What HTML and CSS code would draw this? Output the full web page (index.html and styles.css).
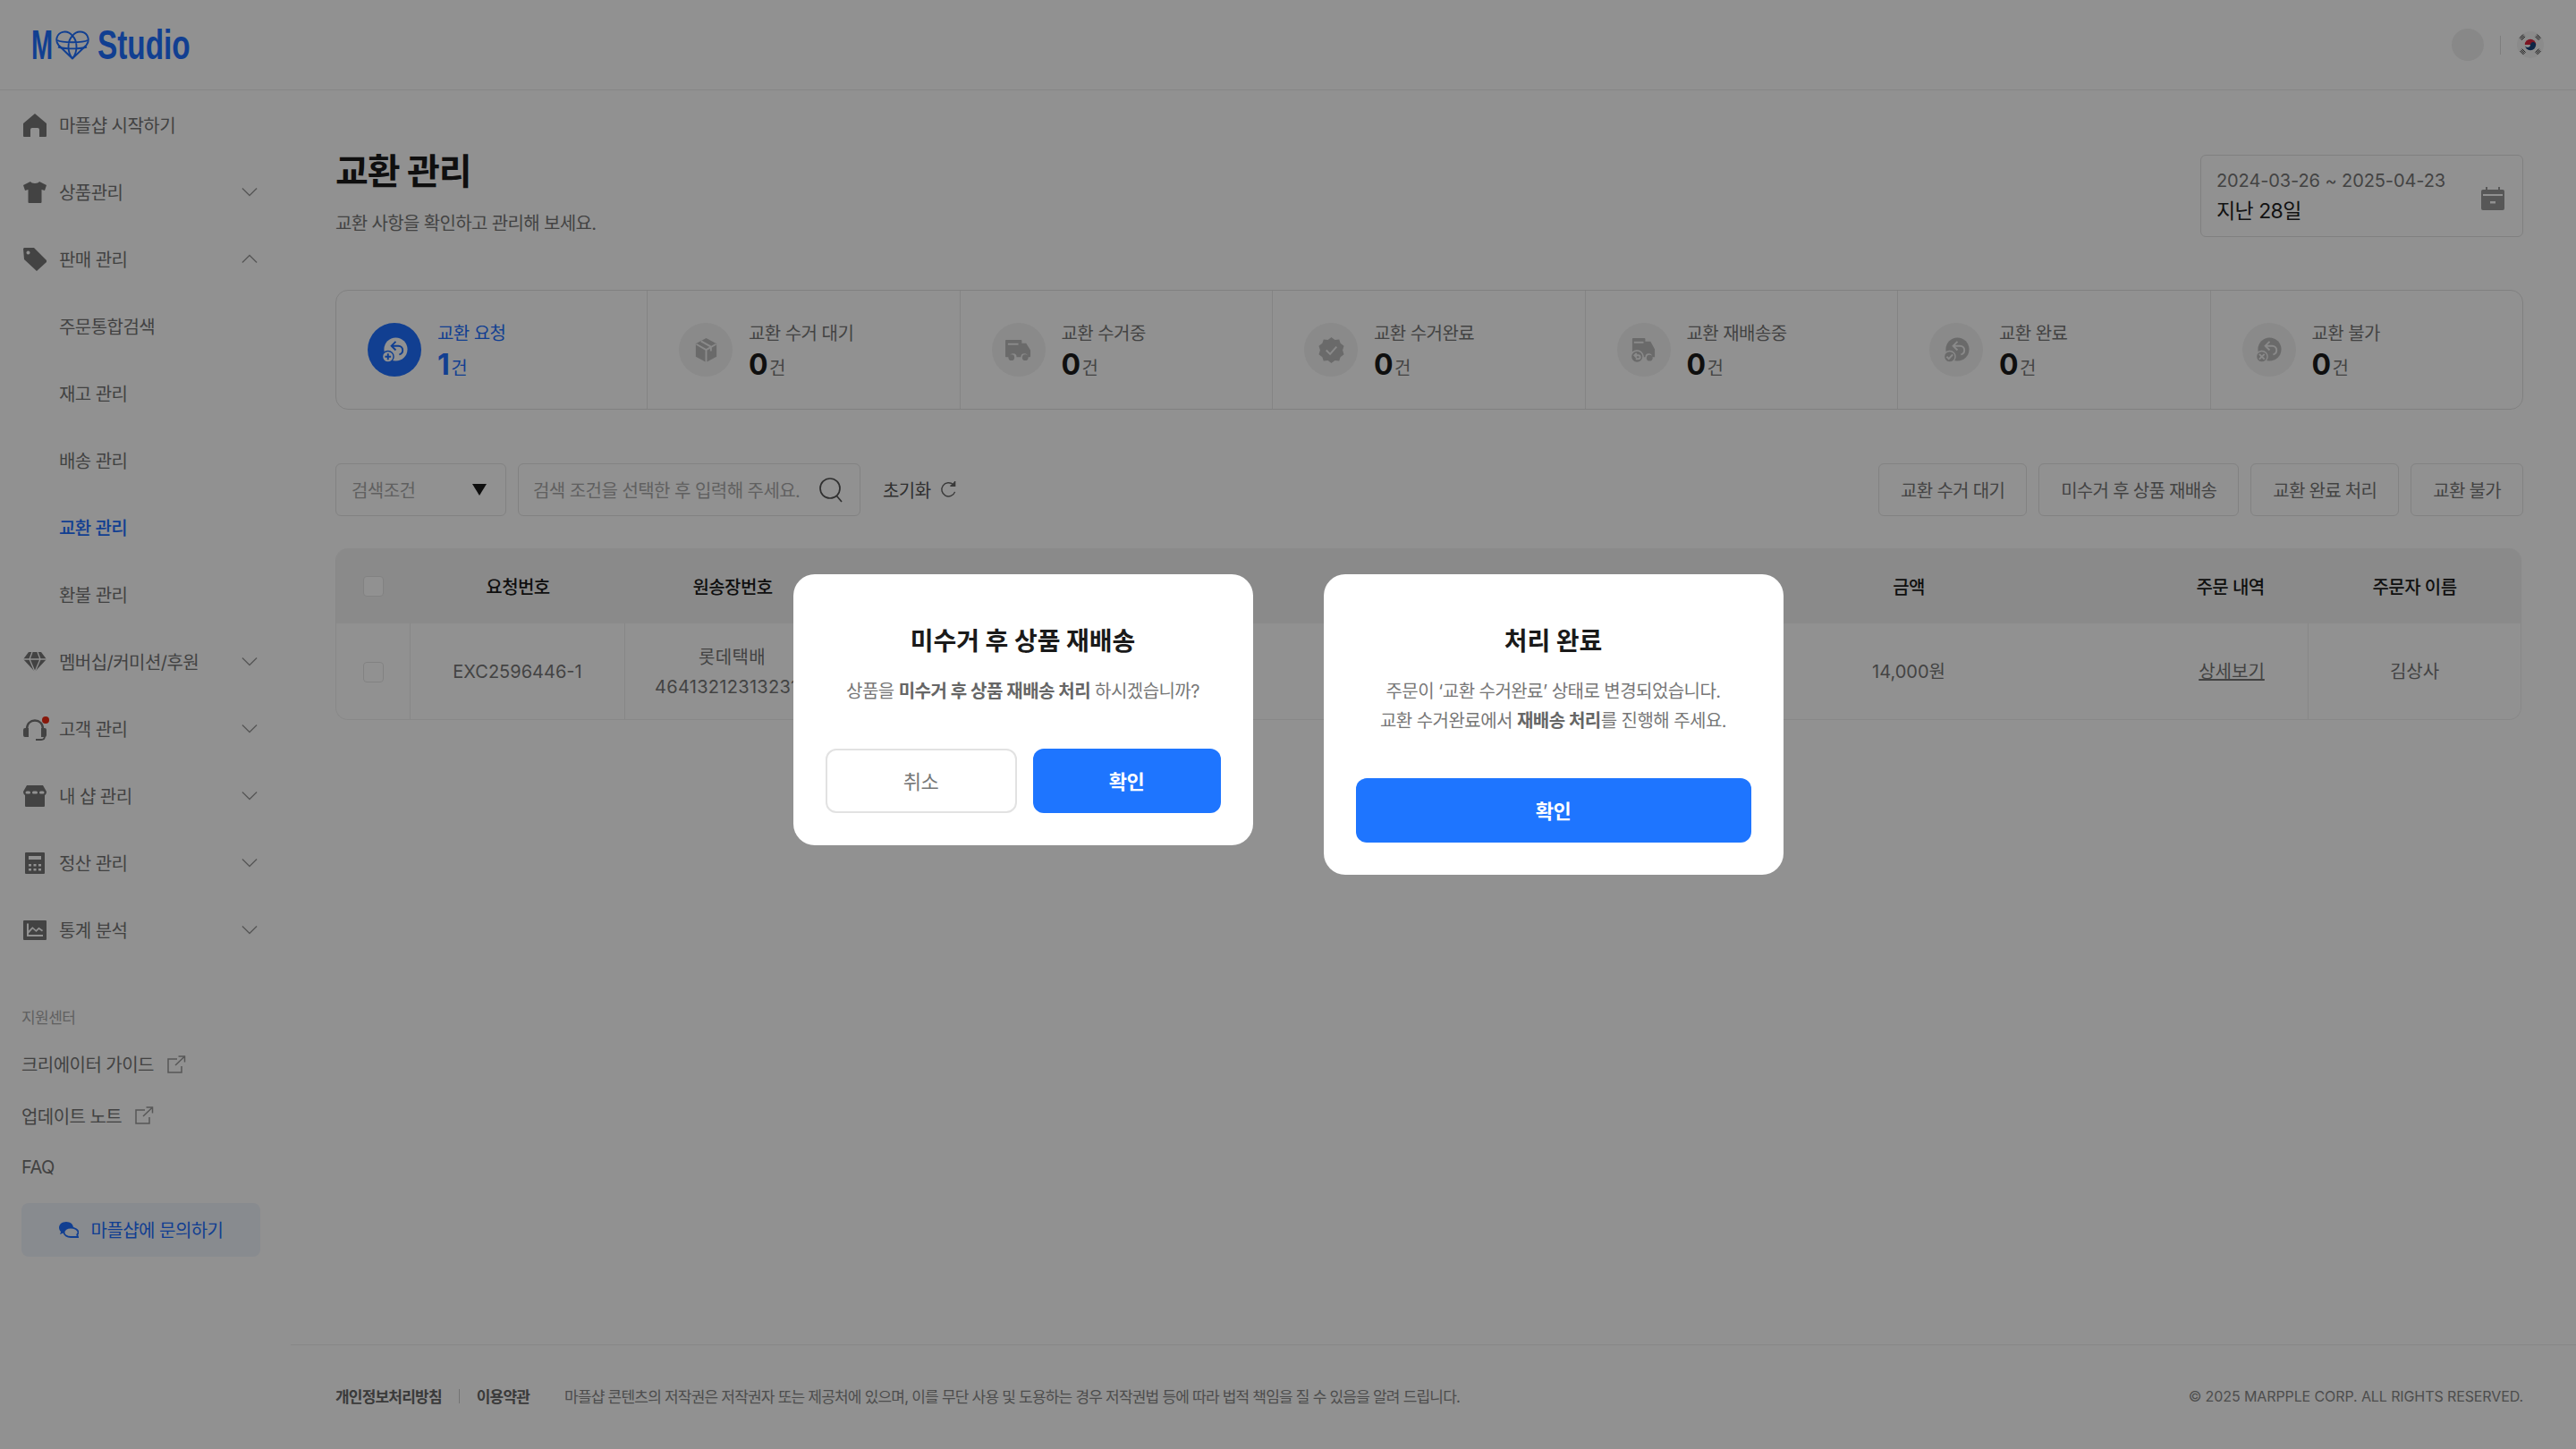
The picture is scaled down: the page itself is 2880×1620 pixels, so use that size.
FILE: index.html
```html
<!DOCTYPE html>
<html lang="ko">
<head>
  <meta charset="UTF-8" />
  <title>교환 관리 - MP Studio</title>
  <link rel="stylesheet" href="styles.css">
</head>
<body>

  <header class="topbar">
    <div class="logo">
      <span class="logo-m">M</span>
      <svg class="logo-heart" viewBox="0 0 38 33" fill="none" stroke="currentColor" stroke-width="1.9">
        <path d="M19 31.500 3.500 16.500C-.5 12 1 3.500 8 1.800c4.500-1 8.500 1 11 4.200 2.500-3.200 6.500-5.200 11-4.200 7 1.700 8.500 10.200 4.500 14.700z"/>
        <path d="M19 6c-6 6-6 18 0 25.500M19 6c6 6 6 18 0 25.500M2 11c5 3 29 3 34 0M3 18.500c6 2.500 26 2.500 32 0"/>
      </svg>
      <span class="logo-word">Studio</span>
    </div>
    <div class="topbar-right">
      <div class="avatar"></div>
      <div class="topbar-sep"></div>
      <svg class="flag" viewBox="0 0 30 30">
        <circle cx="15" cy="15" r="15" fill="#f4f4f4"/>
        <path d="M8.800 15a6.200 6.200 0 0 1 12.400 0z" fill="#d8283f"/>
        <path d="M8.800 15a6.200 6.200 0 0 0 12.400 0c0-1.700-1.400-3.100-3.100-3.100S15 13.300 15 15s-1.400 3.100-3.100 3.100S8.800 16.700 8.800 15z" fill="#17437c"/>
        <g stroke="#333" stroke-width="1">
          <path d="M3 7.500 7 3.500M4 8.700l4-4M5 9.900l4-4"/>
          <path d="M22.500 3.500l4 4M21.500 4.700l4 4M20.500 5.900l4 4"/>
          <path d="M3.500 22l4 4M4.500 20.800l4 4M5.500 19.600l4 4"/>
          <path d="M22.500 26l4-4M21.500 24.800l4-4M20.500 23.600l4-4"/>
        </g>
      </svg>
    </div>
  </header>

  <div class="layout">
    <aside class="sidebar">
      <nav class="side-nav">
        <a class="nav-item">
          <svg class="nav-icon" viewBox="0 0 26 26"><path d="M13 0 26 11v14a1 1 0 0 1-1 1h-7v-8a2 2 0 0 0-2-2h-6a2 2 0 0 0-2 2v8H1a1 1 0 0 1-1-1V11z"/></svg>
          <span>마플샵 시작하기</span>
        </a>
        <a class="nav-item">
          <svg class="nav-icon" viewBox="0 0 26 26"><path d="M8 1c1 2.500 9 2.500 10 0l8 4-2 6-3.500-1v14a1 1 0 0 1-1 1H6.500a1 1 0 0 1-1-1V10L2 11 0 5z"/></svg>
          <span>상품관리</span>
          <svg class="chev" viewBox="0 0 20 12"><path d="M1 1.500 10 10.500 19 1.500"/></svg>
        </a>
        <a class="nav-item">
          <svg class="nav-icon" viewBox="0 0 26 26"><path d="M1 0h11l14 14a1.500 1.500 0 0 1 0 2L15 26 1 13 0 1zM5.500 3.500a2 2 0 1 0 .01 0z" fill-rule="evenodd"/></svg>
          <span>판매 관리</span>
          <svg class="chev" viewBox="0 0 20 12"><path d="M1 10.500 10 1.500 19 10.500"/></svg>
        </a>
        <a class="nav-item nav-sub">주문통합검색</a>
        <a class="nav-item nav-sub">재고 관리</a>
        <a class="nav-item nav-sub">배송 관리</a>
        <a class="nav-item nav-sub is-current">교환 관리</a>
        <a class="nav-item nav-sub">환불 관리</a>
        <a class="nav-item">
          <svg class="nav-icon" viewBox="0 0 26 26"><path d="M6 2h14l6 8-13 14L0 10z"/><path d="M0 10h26M7 10l6 14 6-14M7 10l3-8M19 10l-3-8" fill="none" stroke="#fff" stroke-width="1.300"/></svg>
          <span>멤버십/커미션/후원</span>
          <svg class="chev" viewBox="0 0 20 12"><path d="M1 1.500 10 10.500 19 1.500"/></svg>
        </a>
        <a class="nav-item">
          <span class="nav-icon-wrap">
            <svg class="nav-icon" viewBox="0 0 26 26">
              <path d="M4 13C4 7 8 3.500 13 3.500S22 7 22 13" fill="none" stroke="#777" stroke-width="2.400"/>
              <path d="M2 12h4v10H2a2 2 0 0 1-2-2v-6a2 2 0 0 1 2-2zM20 12h4a2 2 0 0 1 2 2v6a2 2 0 0 1-2 2h-4z"/>
              <path d="M24 21c0 3-1.500 4-4 4h-6" fill="none" stroke="#777" stroke-width="1.800"/>
            </svg>
            <i class="red-dot"></i>
          </span>
          <span>고객 관리</span>
          <svg class="chev" viewBox="0 0 20 12"><path d="M1 1.500 10 10.500 19 1.500"/></svg>
        </a>
        <a class="nav-item">
          <svg class="nav-icon" viewBox="0 0 26 26"><path d="M4 1h18l4 7c0 3-2 4-2 4v12a1 1 0 0 1-1 1H3a1 1 0 0 1-1-1V12S0 11 0 8zM4 7.500a1.500 1.500 0 0 0 0 3h2.500a1.500 1.500 0 0 0 0-3zm7.500 0a1.500 1.500 0 0 0 0 3h3a1.500 1.500 0 0 0 0-3zm8 0a1.500 1.500 0 0 0 0 3H22a1.500 1.500 0 0 0 0-3z" fill-rule="evenodd"/></svg>
          <span>내 샵 관리</span>
          <svg class="chev" viewBox="0 0 20 12"><path d="M1 1.500 10 10.500 19 1.500"/></svg>
        </a>
        <a class="nav-item">
          <svg class="nav-icon" viewBox="0 0 26 26"><path d="M3 1h20a1 1 0 0 1 1 1v22a1 1 0 0 1-1 1H3a1 1 0 0 1-1-1V2a1 1 0 0 1 1-1zm3 4v4h14V5zm0 9v2.500h3V14zm5.500 0v2.500h3V14zm5.500 0v2.500h3V14zM6 19v2.500h3V19zm5.500 0v2.500h3V19zm5.500 0v2.500h3V19z" fill-rule="evenodd"/></svg>
          <span>정산 관리</span>
          <svg class="chev" viewBox="0 0 20 12"><path d="M1 1.500 10 10.500 19 1.500"/></svg>
        </a>
        <a class="nav-item">
          <svg class="nav-icon" viewBox="0 0 26 26"><path d="M1 2h24a1 1 0 0 1 1 1v20a1 1 0 0 1-1 1H1a1 1 0 0 1-1-1V3a1 1 0 0 1 1-1zm3 3.500V20h18v-2H6v-1.500l4.500-5 4 3.500 3-3 3.500 2.500 1-1.500-4.700-3.300-3 3-4-3.500L6 13.500V5.500z" fill-rule="evenodd"/></svg>
          <span>통계 분석</span>
          <svg class="chev" viewBox="0 0 20 12"><path d="M1 1.500 10 10.500 19 1.500"/></svg>
        </a>
      </nav>

      <div class="support">
        <div class="support-title">지원센터</div>
        <a class="support-link">크리에이터 가이드
          <svg class="ext" viewBox="0 0 21 20"><path d="M11 4H1v15h15v-7M9 11 19.500 1M12.500 1h7v6.500"/></svg>
        </a>
        <a class="support-link">업데이트 노트
          <svg class="ext" viewBox="0 0 21 20"><path d="M11 4H1v15h15v-7M9 11 19.500 1M12.500 1h7v6.500"/></svg>
        </a>
        <a class="support-link">FAQ</a>
        <a class="ask-btn">
          <svg viewBox="0 0 22 20" width="22" height="20">
            <path d="M8 1C3.500 1 0 3.800 0 7.500c0 1.800.8 3.400 2.200 4.600L1 15l4-1.500c1 .3 2 .5 3 .5 4.500 0 8-2.800 8-6.500S12.500 1 8 1z" fill="currentColor"/>
            <path d="M13 7.500c-4 0-7.500 2.200-7.500 5.300S9 18 13 18h8l-.8-2.700c.8-.8 1.300-1.600 1.300-2.500 0-3.100-4.500-5.300-8.500-5.300z" fill="#f0f4fc" stroke="currentColor" stroke-width="1.800"/>
          </svg>
          마플샵에 문의하기
        </a>
      </div>
    </aside>

    <main class="main">
      <div class="content">
        <div class="page-head">
          <div class="page-title">
            <h1>교환 관리</h1>
            <p class="page-desc">교환 사항을 확인하고 관리해 보세요.</p>
          </div>
          <div class="date-box">
            <div class="date-text">
              <div class="date-range">2024-03-26 ~ 2025-04-23</div>
              <div class="date-label">지난 28일</div>
            </div>
            <svg class="date-icon" viewBox="0 0 26 26"><path d="M5 0h2v3h12V0h2v3h3a2 2 0 0 1 2 2v19a2 2 0 0 1-2 2H2a2 2 0 0 1-2-2V5a2 2 0 0 1 2-2h3zM2 8v2h22V8zm8 8v2.500h6V16z" fill-rule="evenodd"/></svg>
          </div>
        </div>

        <section class="stats">
          <div class="stat is-active">
            <div class="stat-icon">
              <svg viewBox="0 0 30 30"><circle cx="16" cy="14" r="13.500"/><path class="cut" d="M20 20c2.500-.5 4-2.500 4-5s-2-5-5-5h-7M16 5l-5 5 5 5"/><circle class="cut-fill" cx="7" cy="22.500" r="6.500"/><path class="cut" d="M3.500 22.500h7M7 19v7"/></svg>
            </div>
            <div class="stat-text"><div class="stat-label">교환 요청</div><div class="stat-value"><b>1</b>건</div></div>
          </div>
          <div class="stat">
            <div class="stat-icon">
              <svg viewBox="0 0 30 30"><path d="M15 1 27 7.500v15L15 29 3 22.500v-15z"/><path class="cut" d="M3.500 8 15 14.500 26.500 8M15 14.500V29M9 4.500 20.500 11v5"/></svg>
            </div>
            <div class="stat-text"><div class="stat-label">교환 수거 대기</div><div class="stat-value"><b>0</b>건</div></div>
          </div>
          <div class="stat">
            <div class="stat-icon">
              <svg viewBox="0 0 30 30"><path d="M1 3h17a1 1 0 0 1 1 1v3h5l5 8v7a1 1 0 0 1-1 1h-2a4 4 0 0 0-8 0h-5a4 4 0 0 0-8 0H1a1 1 0 0 1-1-1V4a1 1 0 0 1 1-1z"/><path class="cut" d="M3 8h12"/><circle cx="7" cy="23.500" r="3.500"/><circle cx="23" cy="23.500" r="3.500"/></svg>
            </div>
            <div class="stat-text"><div class="stat-label">교환 수거중</div><div class="stat-value"><b>0</b>건</div></div>
          </div>
          <div class="stat">
            <div class="stat-icon">
              <svg viewBox="0 0 30 30"><path d="M15 0l4 3 5-.5 1.500 4.500 4 3-1.500 5 1.500 5-4 3-1.500 4.500-5-.5-4 3-4-3-5 .5L4.500 23l-4-3L2 15 .5 10l4-3L6 2.500l5 .5z"/><path class="cut" d="M9 15l4.500 4.500L21 11" stroke-width="3"/></svg>
            </div>
            <div class="stat-text"><div class="stat-label">교환 수거완료</div><div class="stat-value"><b>0</b>건</div></div>
          </div>
          <div class="stat">
            <div class="stat-icon">
              <svg viewBox="0 0 30 30"><path d="M3 1h13a1 1 0 0 1 1 1v3h6l5 9v9h-3a4 4 0 0 0-8 0h-2a8 8 0 0 0-13-6V2a1 1 0 0 1 1-1z"/><path class="cut" d="M4 6h11"/><circle cx="22" cy="24" r="3.500"/><circle class="cut-fill" cx="7.500" cy="22.500" r="7"/><path class="cut" d="M5 21h4a2 2 0 0 1 0 4H6M7 18.500 4.500 21 7 23.500"/></svg>
            </div>
            <div class="stat-text"><div class="stat-label">교환 재배송중</div><div class="stat-value"><b>0</b>건</div></div>
          </div>
          <div class="stat">
            <div class="stat-icon">
              <svg viewBox="0 0 30 30"><circle cx="16" cy="14" r="13.500"/><path class="cut" d="M20 20c2.500-.5 4-2.500 4-5s-2-5-5-5h-7M16 5l-5 5 5 5"/><circle class="cut-fill" cx="7" cy="22.500" r="6.500"/><path class="cut" d="M3.500 22.500l2.500 2.500 4.500-5"/></svg>
            </div>
            <div class="stat-text"><div class="stat-label">교환 완료</div><div class="stat-value"><b>0</b>건</div></div>
          </div>
          <div class="stat">
            <div class="stat-icon">
              <svg viewBox="0 0 30 30"><circle cx="16" cy="14" r="13.500"/><path class="cut" d="M20 20c2.500-.5 4-2.500 4-5s-2-5-5-5h-7M16 5l-5 5 5 5"/><circle class="cut-fill" cx="7" cy="22.500" r="6.500"/><path class="cut" d="M4 19.500l6 6M10 19.500l-6 6"/></svg>
            </div>
            <div class="stat-text"><div class="stat-label">교환 불가</div><div class="stat-value"><b>0</b>건</div></div>
          </div>
        </section>

        <div class="toolbar">
          <div class="select-box">검색조건<i class="tri"></i></div>
          <div class="search-box">
            <span>검색 조건을 선택한 후 입력해 주세요.</span>
            <svg viewBox="0 0 26 28" width="26" height="28" fill="none" stroke="#555" stroke-width="1.700"><circle cx="12" cy="12" r="11"/><path d="M19.500 20.500 25 27"/></svg>
          </div>
          <a class="reset">초기화
            <svg viewBox="0 0 20 20" width="19" height="19" fill="none" stroke="#666" stroke-width="1.500"><path d="M17.500 12.500A8 8 0 1 1 15.500 4"/><path d="M12 5.500h5.500V0" fill="#666"/></svg>
          </a>
          <div class="toolbar-actions">
            <button class="act-btn">교환 수거 대기</button>
            <button class="act-btn">미수거 후 상품 재배송</button>
            <button class="act-btn">교환 완료 처리</button>
            <button class="act-btn">교환 불가</button>
          </div>
        </div>

        <section class="table">
          <div class="table-row table-head">
            <div class="cell"><i class="check"></i></div>
            <div class="cell">요청번호</div>
            <div class="cell">원송장번호</div>
            <div class="cell"></div>
            <div class="cell">금액</div>
            <div class="cell"></div>
            <div class="cell">주문 내역</div>
            <div class="cell">주문자 이름</div>
          </div>
          <div class="table-row table-body">
            <div class="cell line"><i class="check"></i></div>
            <div class="cell line">EXC2596446-1</div>
            <div class="cell cell-stack line">롯데택배<br>464132123132312</div>
            <div class="cell"></div>
            <div class="cell">14,000원</div>
            <div class="cell"></div>
            <div class="cell line"><u class="detail-link">상세보기</u></div>
            <div class="cell">김상사</div>
          </div>
        </section>
      </div>

      <footer class="footer">
        <a class="footer-strong">개인정보처리방침</a>
        <i class="footer-sep"></i>
        <a class="footer-strong">이용약관</a>
        <span class="footer-note">마플샵 콘텐츠의 저작권은 저작권자 또는 제공처에 있으며, 이를 무단 사용 및 도용하는 경우 저작권법 등에 따라 법적 책임을 질 수 있음을 알려 드립니다.</span>
        <span class="footer-copy">© 2025 MARPPLE CORP. ALL RIGHTS RESERVED.</span>
      </footer>
    </main>
  </div>

  <div class="overlay">
    <div class="modal">
      <h2>미수거 후 상품 재배송</h2>
      <p>상품을 <b>미수거 후 상품 재배송 처리</b> 하시겠습니까?</p>
      <div class="modal-btns">
        <button class="btn-cancel">취소</button>
        <button class="btn-ok">확인</button>
      </div>
    </div>
    <div class="modal">
      <h2>처리 완료</h2>
      <p>주문이 ‘교환 수거완료’ 상태로 변경되었습니다.<br>교환 수거완료에서 <b>재배송 처리</b>를 진행해 주세요.</p>
      <div class="modal-btns">
        <button class="btn-ok">확인</button>
      </div>
    </div>
  </div>

</body>
</html>
```

FILE: styles.css
```css
* {
  box-sizing: border-box;
  margin: 0;
  padding: 0;
}

body {
  width: 2880px;
  height: 1620px;
  overflow: hidden;
  background: #fff;
  font-family: Inter, "Noto Sans CJK KR", sans-serif;
  font-size: 20px;
  letter-spacing: -0.55px;
  color: #777;
}

a { color: inherit; text-decoration: none; }

button {
  font-family: inherit;
  letter-spacing: inherit;
  cursor: pointer;
}

/* header */
.topbar {
  height: 101px;
  padding: 0 36px 0 35px;
  border-bottom: 1px solid #ececec;
  display: flex;
  align-items: center;
  justify-content: space-between;
}

.logo {
  display: flex;
  align-items: center;
  color: #1e6fff;
  font-family: "Liberation Sans", sans-serif;
  font-weight: 700;
  font-size: 46px;
  letter-spacing: 0;
  line-height: 1;
}

.logo-m,
.logo-word {
  display: inline-block;
  transform-origin: left center;
}

.logo-m {
  transform: scaleX(0.63);
  margin-right: -14px;
}

.logo-word {
  transform: scaleX(0.725);
  margin-right: -39px;
}

.logo-heart {
  width: 38px;
  height: 33px;
  margin: 0 9px 0 3px;
}

.topbar-right {
  display: flex;
  align-items: center;
}

.avatar {
  width: 36px;
  height: 36px;
  border-radius: 50%;
  background: #efefef;
}

.topbar-sep {
  width: 1px;
  height: 21px;
  background: #ddd;
  margin: 0 18px;
}

.flag {
  width: 30px;
  height: 30px;
}

.layout {
  display: flex;
  height: 1519px;
}

/* sidebar */
.sidebar {
  width: 320px;
  flex-shrink: 0;
}

.side-nav { padding-top: 1px; }

.nav-item {
  height: 75px;
  padding: 0 32px 0 26px;
  display: flex;
  align-items: center;
  gap: 14px;
  color: #757575;
}

.nav-icon {
  width: 26px;
  height: 26px;
  flex-shrink: 0;
  fill: #777;
  display: block;
}

.nav-icon-wrap {
  position: relative;
  display: block;
}

.red-dot {
  position: absolute;
  top: -1px;
  right: -3px;
  width: 8px;
  height: 8px;
  border-radius: 50%;
  background: #ef2a12;
}

.chev {
  width: 18px;
  height: 11px;
  margin-left: auto;
  fill: none;
  stroke: #999;
  stroke-width: 1.5;
}

.nav-sub { padding-left: 66px; }

.nav-sub.is-current {
  color: #1e6fff;
  font-weight: 500;
}

.support {
  padding: 49px 29px 0 24px;
}

.support-title {
  font-size: 17px;
  line-height: 24px;
  color: #aaa;
  margin-bottom: 11px;
}

.support-link {
  height: 57.5px;
  display: flex;
  align-items: center;
  gap: 15px;
  color: #757575;
}

.ext {
  width: 21px;
  height: 20px;
  fill: none;
  stroke: #999;
  stroke-width: 1.5;
}

.ask-btn {
  height: 60px;
  margin-top: 11px;
  border-radius: 8px;
  background: #f0f4fc;
  color: #1e6fff;
  display: flex;
  align-items: center;
  justify-content: center;
  gap: 14px;
}

/* main */
.main {
  flex: 1;
  display: flex;
  flex-direction: column;
  justify-content: space-between;
}

.content {
  padding: 72px 59px 0 55px;
}

.page-head {
  display: flex;
  justify-content: space-between;
  align-items: flex-start;
  height: 151px;
}

.page-title { margin-top: -6px; }

.page-head h1 {
  font-size: 40px;
  font-weight: 700;
  line-height: 50px;
  letter-spacing: -1px;
  color: #1c1c1c;
}

.page-desc {
  margin-top: 19px;
  line-height: 28px;
  letter-spacing: -0.65px;
  color: #777;
}

.date-box {
  width: 361px;
  height: 92px;
  padding: 0 20px 0 17px;
  border: 1px solid #e2e2e2;
  border-radius: 6px;
  display: flex;
  align-items: center;
  justify-content: space-between;
}

.date-text { padding-top: 3px; }

.date-range {
  line-height: 30px;
  letter-spacing: -0.1px;
  color: #777;
}

.date-label {
  font-size: 23px;
  font-weight: 400;
  line-height: 38px;
  color: #222;
}

.date-icon {
  width: 26px;
  height: 26px;
  fill: #999;
  margin-top: 5px;
}

.stats {
  height: 134px;
  border: 1px solid #e2e2e2;
  border-radius: 14px;
  display: grid;
  grid-template-columns: 347px repeat(6, 1fr);
}

.stat {
  padding-left: 35px;
  display: flex;
  align-items: center;
  gap: 18px;
  border-left: 1px solid #e8e8e8;
}

.stat:first-child { border-left: none; }

.stat-icon {
  width: 60px;
  height: 60px;
  border-radius: 50%;
  background: #f2f2f2;
  color: #bbb;
  --bg: #f2f2f2;
  display: flex;
  align-items: center;
  justify-content: center;
}

.stat-icon svg {
  width: 29px;
  height: 29px;
  fill: currentColor;
}

.stat-icon .cut {
  fill: none;
  stroke: var(--bg);
  stroke-width: 2;
}

.stat-icon .cut-fill {
  fill: currentColor;
  stroke: var(--bg);
  stroke-width: 1.5;
}

.stat-text { padding-top: 7px; }

.stat-label {
  line-height: 28px;
  color: #777;
}

.stat-value {
  margin-top: 2px;
  line-height: 38px;
  color: #777;
  display: flex;
  align-items: baseline;
  gap: 2px;
}

.stat-value b {
  font-size: 32px;
  font-weight: 700;
  color: #1c1c1c;
}

.is-active .stat-icon {
  background: #1e6fff;
  color: #fff;
  --bg: #1e6fff;
}

.is-active .stat-label,
.is-active .stat-value,
.is-active .stat-value b { color: #1e6fff; }

.toolbar {
  margin-top: 60px;
  height: 59px;
  display: flex;
  align-items: stretch;
  gap: 13px;
}

.select-box {
  width: 191px;
  padding: 0 21px 0 17px;
  border: 1px solid #e4e4e4;
  border-radius: 6px;
  color: #aaa;
  display: flex;
  align-items: center;
  justify-content: space-between;
}

.tri {
  width: 0;
  height: 0;
  border-left: 8px solid transparent;
  border-right: 8px solid transparent;
  border-top: 13px solid #1c1c1c;
}

.search-box {
  width: 383px;
  padding: 0 19px 0 16px;
  border: 1px solid #e4e4e4;
  border-radius: 6px;
  color: #aaa;
  display: flex;
  align-items: center;
  justify-content: space-between;
}

.reset {
  margin-left: 12px;
  display: flex;
  align-items: center;
  gap: 10px;
  color: #555;
}

.toolbar-actions {
  margin-left: auto;
  display: flex;
  gap: 13px;
}

.act-btn {
  padding: 0 24px;
  font-size: 20px;
  letter-spacing: -0.7px;
  border: 1px solid #e4e4e4;
  border-radius: 6px;
  background: #fff;
  color: #777;
}

.table {
  margin-top: 36px;
  width: 2444px;
  border-radius: 14px;
  overflow: hidden;
  border: 1px solid #f0f0f0;
  border-top: none;
}

.table-row {
  display: grid;
  grid-template-columns: 83px 240px 240px 1082px 226px 159px 175px 1fr;
}

.table-head {
  height: 84px;
  background: #f3f3f3;
  color: #1c1c1c;
  font-weight: 500;
}

.table-body {
  height: 107px;
  color: #777;
  line-height: 33px;
  letter-spacing: 0;
}

.table-body .cell { padding-top: 2px; }

.cell {
  display: flex;
  align-items: center;
  justify-content: center;
  text-align: center;
}

.cell.line { border-right: 1px solid #eee; }

.table-body .cell-stack {
  display: block;
  padding-top: 22px;
  white-space: nowrap;
  letter-spacing: 0.3px;
}

.detail-link { margin-left: 4px; }

.check {
  width: 23px;
  height: 23px;
  border: 1px solid #e4e4e4;
  border-radius: 4px;
  background: #fff;
  display: block;
}

.footer {
  height: 117px;
  margin-left: 5px;
  padding: 0 59px 3px 50px;
  border-top: 1px solid #eee;
  display: flex;
  align-items: center;
  font-size: 17px;
  letter-spacing: -0.8px;
  color: #888;
}

.footer-strong {
  font-weight: 700;
  color: #666;
}

.footer-sep {
  width: 1px;
  height: 16px;
  background: #ccc;
  margin: 0 19px;
}

.footer-note { margin-left: 39px; }

.footer-copy {
  margin-left: auto;
  font-size: 16px;
  letter-spacing: -0.1px;
}

/* modals */
.overlay {
  position: fixed;
  top: 0;
  right: 0;
  bottom: 0;
  left: 0;
  padding-top: 642px;
  background: rgba(0, 0, 0, 0.43);
  display: flex;
  justify-content: center;
  align-items: flex-start;
  gap: 79px;
}

.modal {
  width: 514px;
  padding: 50px 36px 36px;
  background: #fff;
  border-radius: 24px;
  text-align: center;
}

.modal h2 {
  font-size: 28px;
  font-weight: 700;
  line-height: 50px;
  letter-spacing: 0;
  color: #1a1a1a;
}

.modal p {
  margin-top: 15px;
  line-height: 33px;
  color: #777;
}

.modal p b {
  font-weight: 600;
  color: #666;
}

.modal-btns {
  margin-top: 47px;
  display: flex;
  gap: 18px;
}

.modal-btns button {
  flex: 1;
  height: 72px;
  padding-bottom: 2px;
  border-radius: 12px;
  font-size: 22px;
}

.btn-cancel {
  background: #fff;
  border: 2px solid #e2e2e2;
  color: #777;
}

.btn-ok {
  background: #1e75ff;
  border: none;
  color: #fff;
  font-weight: 600;
}
```
